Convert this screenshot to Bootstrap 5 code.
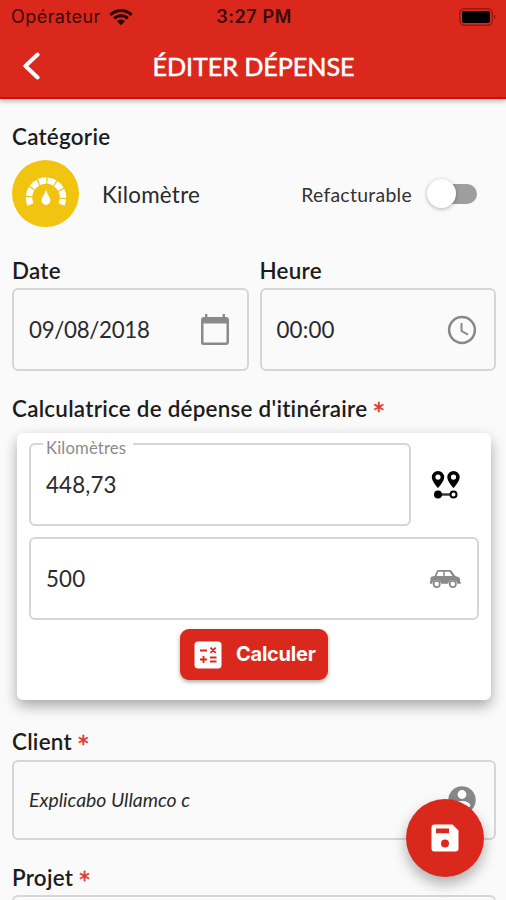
<!DOCTYPE html>
<html lang="fr">
<head>
<meta charset="utf-8">
<meta name="viewport" content="width=device-width, initial-scale=1">
<title>Éditer dépense</title>
<link href="https://cdn.jsdelivr.net/npm/bootstrap@5.3.0/dist/css/bootstrap.min.css" rel="stylesheet">
<style>
  body { font-family: Lato, sans-serif; background: #fafafa; color: #1c1c1c; height: 900px; overflow: hidden; line-height: 1.2; }
  svg { display: block; flex: none; }
  .app-header { height: 99px; background: #da291c; box-shadow: 0 2px 5px rgba(0,0,0,.3); border-bottom: 2px solid #d20c0c; }
  .status-bar { height: 34px; font-family: Inter, sans-serif; font-size: 18px; color: #3b0906; padding: 0 9px 0 11px; }
  .status-side { flex: 1 1 0; }
  .carrier { letter-spacing: .45px; }
  .status-time { font-weight: 600; font-size: 18px; letter-spacing: .6px; }
  .title-bar { height: 63px; color: #fff; padding-left: 22px; padding-right: 39px; }
  .title-bar h1 { font-size: 25.2px; font-weight: 400; letter-spacing: -.1px; -webkit-text-stroke: .5px #fff; padding-top: 2px; }
  .page { padding: 0 10px 0 12px; height: 801px; overflow: hidden; }
  .section-label { font-size: 22.4px; font-weight: 600; line-height: 26px; letter-spacing: .26px; }
  .req { color: #e5352b; font-weight: 400; font-size: 31px; line-height: 0; vertical-align: -7.5px; margin-left: -1px; letter-spacing: 0; -webkit-text-stroke: .4px #e5352b; }
  .category-label { padding-top: 25px; height: 61px; }
  .category-row { height: 67px; }
  .category-icon { width: 67px; height: 67px; background: #f1c40f; }
  .category-name { font-size: 22.4px; margin-left: 23px; letter-spacing: .25px; padding-top: 4px; color: #2a2a2a; }
  .refact { font-size: 19.4px; letter-spacing: .3px; color: #333; padding-top: 2px; }
  .toggle { width: 50px; height: 32px; margin: 0 19px 0 15px; }
  .track { width: 42px; height: 20px; background: #9e9e9e; }
  .knob { width: 29px; height: 29px; background: #fff; left: 0; top: 1px; box-shadow: 0 1px 4px rgba(0,0,0,.3); }
  .field-box { height: 83px; border: 2px solid #d6d6d6; border-radius: 6px; padding: 0 16px 0 15px; font-size: 22.3px; letter-spacing: .15px; color: #2a2a2a; }
  .field-value { padding-top: 2px; }
  .dates { padding-top: 31px; gap: 11px; }
  .date-col { flex: 1 1 0; }
  .dates .section-label { height: 30px; }
  .dates .field-box span { padding-top: 2px; }
  .date-value { letter-spacing: -.3px; }
  .calc-label { padding-top: 25px; height: 62px; }
  .calc-card { margin: 0 5px; height: 267px; background: #fff; border-radius: 6px; box-shadow: 0 6px 14px rgba(0,0,0,.33); padding: 10px 12px 0 12px; }
  .km-field { width: 382px; }
  .km-legend { left: 12px; top: -7px; padding: 0 7px 0 3px; font-size: 16.7px; line-height: 20px; color: #8b8b8b; background: #fff; }
  .route-icon { margin-right: 18px; }
  .vehicle-field { margin-top: 11px; }
  .calc-btn { width: 148px; height: 51px; margin-top: 9px; padding: 0 0 0 14px; background: #da291c; border-radius: 9px; box-shadow: 0 2px 4px rgba(0,0,0,.35); font-family: Inter, sans-serif; font-size: 20px; font-weight: 700; letter-spacing: -.25px; gap: 14px; border: 0; color: #fff; }
  .calc-btn span { padding-bottom: 2px; }
  .client-label { padding-top: 29px; height: 60px; }
  .client-field { height: 80px; font-size: 19.4px; font-style: italic; letter-spacing: 0; }
  .project-label { padding-top: 25px; height: 55px; }
  .fab { width: 78px; height: 78px; left: 406px; top: 799px; background: #da291c; box-shadow: 0 7px 14px rgba(0,0,0,.3); border: 0; }
</style>
</head>
<body>
<header class="app-header position-relative">
  <div class="status-bar d-flex align-items-center">
    <div class="status-side d-flex align-items-center gap-2">
      <span class="carrier">Opérateur</span>
      <svg width="24" height="18" viewBox="0 0 24 18" fill="none" stroke="#240000"><path d="M1.4 6.800a15.200 15.200 0 0 1 21.200 0M5.200 10.400a9.800 9.800 0 0 1 13.600 0" stroke-width="3"/><path d="M12 17.200 8 13.100a5.800 5.800 0 0 1 8 0z" fill="#240000" stroke="none"/></svg>
    </div>
    <span class="status-time">3:27 PM</span>
    <div class="status-side d-flex justify-content-end">
      <svg width="38" height="18" viewBox="0 0 38 18"><rect x=".8" y=".8" width="32.500" height="16.400" rx="4.500" fill="none" stroke="#941a12" stroke-width="1.400"/><rect x="3" y="3" width="28" height="12" rx="2" fill="#000"/><path d="M35.200 6.500q2.600 2.500 0 5z" fill="#821510"/></svg>
    </div>
  </div>
  <div class="title-bar d-flex align-items-center">
    <svg width="18" height="30" viewBox="0 0 18 30"><path d="M15.600 3.500 3.400 15l12.200 11.500" fill="none" stroke="#fff" stroke-width="4" stroke-linecap="round" stroke-linejoin="round"/></svg>
    <h1 class="flex-fill text-center m-0">ÉDITER DÉPENSE</h1>
  </div>
</header>
<main class="page">
  <div class="section-label category-label">Catégorie</div>
  <div class="category-row d-flex align-items-center">
    <div class="category-icon rounded-circle d-flex align-items-center justify-content-center">
      <svg width="42" height="34" viewBox="0 0 42 34"><path d="M5.500 27.500A17 17 0 1 1 36.500 27.500" fill="none" stroke="#fff" stroke-width="6.400" stroke-dasharray="7.600 1.200"/><path d="M21 12.500c1 5 4.400 7.400 4.400 11a4.400 4.400 0 0 1-8.800 0c0-3.600 3.400-6 4.400-11z" fill="#fff"/></svg>
    </div>
    <span class="category-name">Kilomètre</span>
    <span class="refact ms-auto">Refacturable</span>
    <div class="toggle position-relative d-flex align-items-center justify-content-end">
      <div class="track rounded-pill"></div>
      <div class="knob rounded-circle position-absolute"></div>
    </div>
  </div>
  <div class="dates d-flex">
    <div class="date-col">
      <div class="section-label">Date</div>
      <div class="field-box d-flex align-items-center justify-content-between">
        <span class="date-value">09/08/2018</span>
        <svg width="31" height="34" viewBox="0 0 31 34" fill="#8a8a8a"><path fill-rule="evenodd" d="M5 1h2.400v3h15.200V1H25v3h1.500A2.600 2.600 0 0 1 29 6.600v22.900a2.600 2.600 0 0 1-2.500 2.500h-23A2.500 2.500 0 0 1 1 29.500V6.600A2.600 2.600 0 0 1 3.500 4H5zM3.500 10.500v19h23v-19z"/></svg>
      </div>
    </div>
    <div class="date-col">
      <div class="section-label">Heure</div>
      <div class="field-box d-flex align-items-center justify-content-between">
        <span>00:00</span>
        <svg width="32" height="30" viewBox="0 0 32 30" fill="none" stroke="#888" stroke-width="2.500"><circle cx="16" cy="15" r="12.900"/><path d="M15.500 8v8l6.500 3.700" stroke-width="2"/></svg>
      </div>
    </div>
  </div>
  <div class="section-label calc-label">Calculatrice de dépense d'itinéraire <span class="req">*</span></div>
  <section class="calc-card">
    <div class="d-flex align-items-center">
      <div class="field-box km-field position-relative d-flex align-items-center">
        <span class="km-legend position-absolute">Kilomètres</span>
        <span class="field-value">448,73</span>
      </div>
      <svg class="route-icon ms-auto" width="30" height="30" viewBox="0 0 30 30"><path id="pin" fill-rule="evenodd" d="M7 1a6.200 6.200 0 0 0-6.200 6.200C.8 11.500 7 18 7 18s6.200-6.500 6.200-10.800A6.200 6.200 0 0 0 7 1zm0 3.500a2.600 2.600 0 1 1 0 5.200 2.600 2.600 0 0 1 0-5.200z"/><use href="#pin" x="15.500"/><path d="M7 24.500h12" stroke="#333" stroke-width="2.400"/><circle cx="7" cy="24.500" r="4"/><circle cx="22.500" cy="24.500" r="3" fill="#fff" stroke="#000" stroke-width="2"/></svg>
    </div>
    <div class="field-box vehicle-field d-flex align-items-center justify-content-between">
      <span class="field-value">500</span>
      <svg width="32" height="20" viewBox="0 0 32 20"><path fill-rule="evenodd" fill="#8a8a8a" d="M9.500 1h11.300q1 0 1.700.8L26.300 7l3.200 1q1.500.5 1.500 2v2.500l.8.500v1.700h-3.500a4.600 4.600 0 0 0-9 0h-7.100a4.600 4.600 0 0 0-9 0H.8V13l.6-.8V9.500Q1.500 8 3 7.600L5.500 7l2.300-5Q8.300 1 9.500 1zM9.300 2.700 7.500 7h6.800V2.700zm6.500 0V7h7.700l-3-4.300z"/><g fill="#fff" stroke="#8a8a8a" stroke-width="1.700"><circle cx="7.700" cy="15" r="3.100"/><circle cx="23.800" cy="15" r="3.100"/></g></svg>
    </div>
    <button class="calc-btn d-flex align-items-center mx-auto" type="button">
      <svg width="28" height="28" viewBox="0 0 28 28"><rect x=".5" y=".5" width="27" height="27" rx="3.500" fill="#fff"/><path d="M6 9.500h7M16.500 6.700l5.200 5.200m0-5.200-5.200 5.200M6 18.500h7M9.500 15v7M16 16.500h6.500M16 20.500h6.500" stroke="#da291c" stroke-width="1.900" fill="none"/></svg>
      <span>Calculer</span>
    </button>
  </section>
  <div class="section-label client-label">Client <span class="req">*</span></div>
  <div class="field-box client-field d-flex align-items-center justify-content-between">
    <span>Explicabo Ullamco c</span>
    <svg width="32" height="28" viewBox="0 0 32 28"><circle cx="16" cy="14" r="13.700" fill="#888"/><circle cx="16" cy="8.500" r="4.400" fill="#fff"/><path d="M7.500 19.500q1.500-4.500 8.500-4.500t8.500 4.500q-3 4.500-8.500 4.500t-8.500-4.500z" fill="#fff"/></svg>
  </div>
  <div class="section-label project-label">Projet <span class="req">*</span></div>
  <div class="field-box border-bottom-0"></div>
</main>
<button class="fab rounded-circle position-absolute d-flex align-items-center justify-content-center p-0" type="button" aria-label="Enregistrer">
  <svg width="28" height="28" viewBox="0 0 28 28"><path fill="#fff" fill-rule="evenodd" d="M3.500.5h18l6 6v18a3 3 0 0 1-3 3h-21a3 3 0 0 1-3-3v-21a3 3 0 0 1 3-3zM5 4.500v4.800h13V4.500zM14 15.500a4 4 0 1 0 0 8 4 4 0 0 0 0-8z"/></svg>
</button>
<script src="https://cdn.jsdelivr.net/npm/bootstrap@5.3.0/dist/js/bootstrap.bundle.min.js"></script>
</body>
</html>
